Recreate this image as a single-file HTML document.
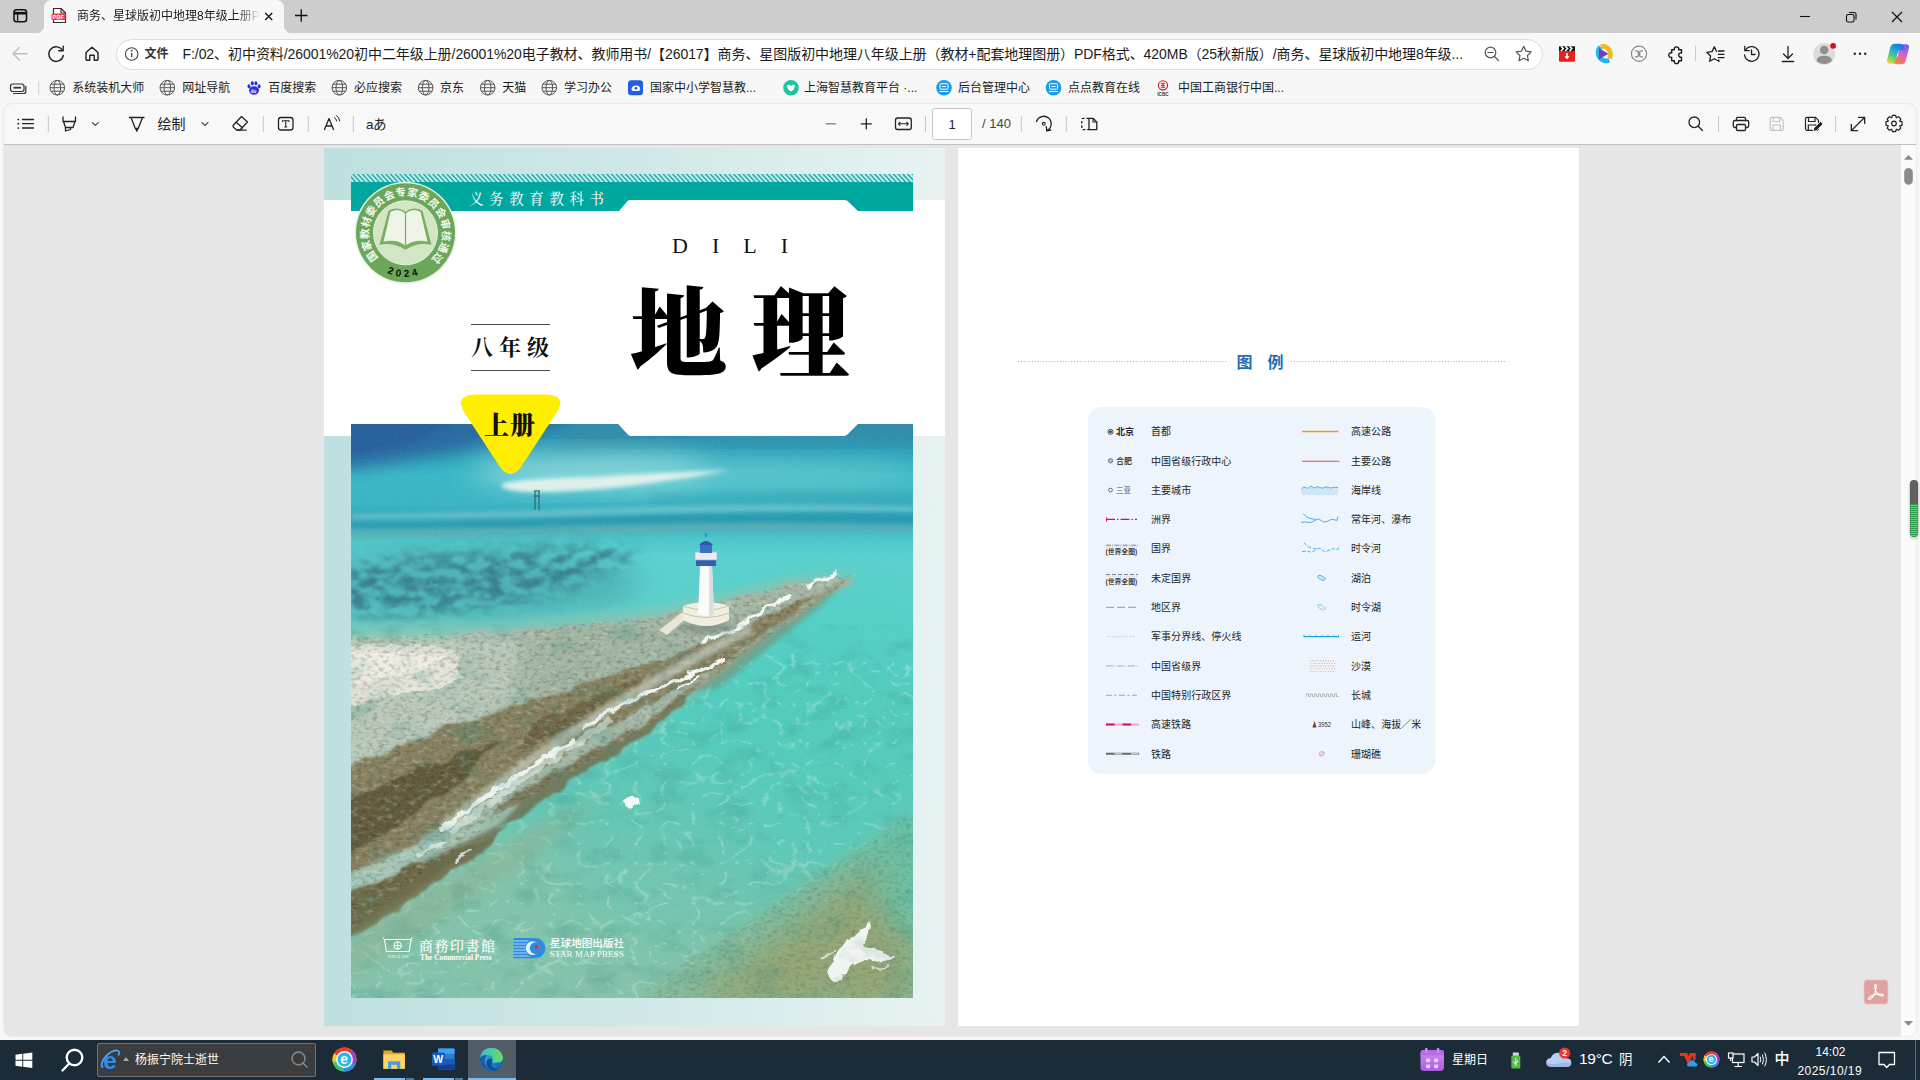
<!DOCTYPE html>
<html lang="zh-CN">
<head>
<meta charset="utf-8">
<title>商务、星球版初中地理8年级上册</title>
<style>
html,body{margin:0;padding:0}
html{width:1920px;height:1080px;overflow:hidden}
body{width:1920px;height:1080px;overflow:hidden;position:relative;background:#f7f7f7;
 font-family:"Liberation Sans","Noto Sans CJK SC",sans-serif;color:#1b1b1b;-webkit-font-smoothing:antialiased}
.a{position:absolute}
svg{position:absolute;overflow:visible}
.ic{fill:none;stroke:#1f1f1f;stroke-width:1.3;stroke-linecap:round;stroke-linejoin:round}
/* ---------- browser chrome ---------- */
#tabbar{left:0;top:0;width:1920px;height:33px;background:#cdcdcd}
#tab{left:44px;top:0;width:240px;height:33px;background:#f7f7f7;border-radius:8px 8px 0 0}
#tab:before,#tab:after{content:"";position:absolute;bottom:0;width:8px;height:8px}
#tab:before{left:-8px;background:radial-gradient(circle at 0 0,transparent 8px,#f7f7f7 8.5px)}
#tab:after{right:-8px;background:radial-gradient(circle at 100% 0,transparent 8px,#f7f7f7 8.5px)}
#tabtitle{left:33px;top:7px;width:185px;height:20px;font-size:12px;line-height:18px;white-space:nowrap;overflow:hidden;
 -webkit-mask-image:linear-gradient(90deg,#000 160px,transparent 183px);mask-image:linear-gradient(90deg,#000 160px,transparent 183px)}
#addr{left:0;top:33px;width:1920px;height:43px;background:#f7f7f7}
#url{left:116px;top:38.500px;width:1425px;height:29px;border-radius:16px;background:#fff;border:1px solid #dcdcdc}
#wenjian{left:144.500px;top:45px;font-size:12px;font-weight:700;line-height:18px;color:#333}
#urltext{left:182.500px;top:45px;font-size:14px;line-height:18px;white-space:nowrap;color:#1b1b1b;letter-spacing:-0.065px}
#bm{left:0;top:76px;width:1920px;height:28px;background:#f7f7f7}
.bk{position:absolute;top:79.500px;font-size:12px;line-height:16px;white-space:nowrap;color:#1b1b1b}
#pdfbar{left:4px;top:104px;width:1912px;height:40px;background:#f8f8f8;border-bottom:1px solid #c9c9c9;border-radius:8px 8px 0 0;box-shadow:0 0 2px rgba(0,0,0,.18)}
#huizhi{left:157.500px;top:114px;font-size:14px;line-height:20px;color:#222}
#pagebox{left:932px;top:108px;width:38px;height:30px;border:1px solid #c6c6c6;border-radius:3px;background:#fff;font-size:13px;line-height:31px;text-align:center;color:#222}
#pagecount{left:982px;top:114px;font-size:13px;line-height:20px;color:#444}
.sep{position:absolute;width:1px;background:#c8c8c8}
/* ---------- content ---------- */
#panel{left:4px;top:145px;width:1912px;height:891px;background:#e6e6e6;border-radius:0 0 8px 8px;box-shadow:0 0 2px rgba(0,0,0,.15)}
#cover{left:324px;top:148px;width:621px;height:878px;background:linear-gradient(90deg,#bfe0df 0%,#cfe7e6 55%,#e9f3f2 100%);overflow:hidden}
#page2{left:958px;top:148px;width:621px;height:878px;background:#fff}
#sbtrack{left:1901px;top:145px;width:15px;height:891px;background:#fbfbfb;border-radius:0 0 8px 0}
/* ---------- taskbar ---------- */
#task{left:0;top:1040px;width:1920px;height:40px;background:#1c2b38}
#tsearch{left:96.500px;top:1043px;width:217px;height:32px;background:#3b3c3e;border:1px solid #6f7276;border-radius:2px}
#edgebg{left:468px;top:1040px;width:48px;height:40px;background:#525d67}
.tl{top:1078px;height:2px;background:#79bbee}
.tt{color:#fff;line-height:20px;white-space:nowrap}
</style>
</head>
<body>
<!-- TAB BAR -->
<div class="a" id="tabbar"></div>
<div class="a" id="tab"><div class="a" id="tabtitle">商务、星球版初中地理8年级上册PDF</div></div>
<!-- ADDRESS BAR -->
<div class="a" id="addr"></div>
<div class="a" id="url"></div>
<div class="a" id="wenjian">文件</div>
<div class="a" id="urltext">F:/02、初中资料/26001%20初中二年级上册/26001%20电子教材、教师用书/【26017】商务、星图版初中地理八年级上册（教材+配套地理图册）PDF格式、420MB（25秋新版）/商务、星球版初中地理8年级...</div>
<!-- BOOKMARKS -->
<div class="a" id="bm"></div>
<div class="bk" style="left:72.3px">系统装机大师</div>
<div class="bk" style="left:182.3px">网址导航</div>
<div class="bk" style="left:268.3px">百度搜索</div>
<div class="bk" style="left:354px">必应搜索</div>
<div class="bk" style="left:440px">京东</div>
<div class="bk" style="left:502.3px">天猫</div>
<div class="bk" style="left:564px">学习办公</div>
<div class="bk" style="left:650px">国家中小学智慧教...</div>
<div class="bk" style="left:804px">上海智慧教育平台 ·...</div>
<div class="bk" style="left:958px">后台管理中心</div>
<div class="bk" style="left:1068px">点点教育在线</div>
<div class="bk" style="left:1178px">中国工商银行中国...</div>
<!-- PDF TOOLBAR -->
<div class="a" id="pdfbar"></div>
<div class="a" id="huizhi">绘制</div>
<div class="a" id="pagebox">1</div>
<div class="a" id="pagecount">/ 140</div>
<svg id="chromeicons" width="1920" height="146" viewBox="0 0 1920 146" style="left:0;top:0">
<g fill="none" stroke="#111" stroke-width="1.5"><rect x="14" y="9.750" width="12.500" height="12" rx="2.500"/><path d="M14 13.200H26.500" stroke-width="2.600"/><path d="M17.600 13V21.500" stroke-width="1.300"/></g>
<g><path d="M53.500 8.500H61L65.500 13V22.500H53.500Z" fill="#fff" stroke="#2e2e2e" stroke-width="1.200" stroke-linejoin="round"/><path d="M61 8.500V13H65.500" fill="none" stroke="#2e2e2e" stroke-width="1.100"/><rect x="51.500" y="13.500" width="14" height="6.500" rx="1" fill="#e5484d"/><text x="52.600" y="19" font-family="'Liberation Sans',sans-serif" font-weight="700" font-size="5.400" fill="#fff" letter-spacing=".2">PDF</text></g>
<path d="M265.200 13L272.200 20M272.200 13L265.200 20" stroke="#111" stroke-width="1.300" fill="none"/>
<path d="M295 15.500H307.500M301.250 9.250V21.750" stroke="#111" stroke-width="1.300" fill="none"/>
<path d="M1800 16.500H1810" stroke="#111" stroke-width="1.100"/>
<g fill="none" stroke="#111" stroke-width="1.100"><rect x="1846.500" y="14.500" width="7.500" height="7.500" rx="1.500"/><path d="M1849 12.500H1854Q1856 12.500 1856 14.500V19.500"/></g>
<path d="M1892 12L1902 22M1902 12L1892 22" stroke="#111" stroke-width="1.200" fill="none"/>
<path d="M27 53.700H13M19.300 47.500L13 53.700L19.300 60" fill="none" stroke="#bdbdbd" stroke-width="1.400" stroke-linecap="round" stroke-linejoin="round"/>
<g fill="none" stroke="#222" stroke-width="1.400" stroke-linecap="round" stroke-linejoin="round"><path d="M62.500 50.500A7.300 7.300 0 1 0 63.300 55.500"/><path d="M63.200 46.300V50.800H58.700"/></g>
<path d="M86 52.500L92 47.200L98 52.500V59.500Q98 60.200 97.300 60.200H94.200V55.200H89.800V60.200H86.700Q86 60.200 86 59.500Z" fill="none" stroke="#222" stroke-width="1.400" stroke-linejoin="round"/>
<g><circle cx="131.700" cy="54" r="6.300" fill="none" stroke="#444" stroke-width="1.100"/><path d="M131.700 53V57.200" stroke="#444" stroke-width="1.300"/><circle cx="131.700" cy="50.700" r=".9" fill="#444"/></g>
<g fill="none" stroke="#555" stroke-width="1.200" stroke-linecap="round"><circle cx="1490.500" cy="52.500" r="5.300"/><path d="M1494.500 56.500L1498.500 60.500M1487.800 52.500H1493.200"/></g>
<path d="M1523.70 46.30L1525.99 51.14L1531.31 51.83L1527.41 55.51L1528.40 60.77L1523.70 58.20L1519.00 60.77L1519.99 55.51L1516.09 51.83L1521.41 51.14Z" fill="none" stroke="#555" stroke-width="1.200" stroke-linejoin="round"/>
<g><rect x="1559" y="50.500" width="16" height="11.300" rx="1" fill="#e8211b"/><path d="M1559 46.300H1575V51H1559Z" fill="#111"/><path d="M1561 46.300L1563.300 48.600L1561 51M1565.300 46.300L1567.600 48.600L1565.300 51M1569.600 46.300L1571.900 48.600L1569.600 51" stroke="#fff" stroke-width="1.500" fill="none"/><path d="M1567 53V57.200" stroke="#fff" stroke-width="1.600"/><path d="M1564.300 56.300H1569.700L1567 59.300Z" fill="#fff"/></g>
<g fill="none"><path d="M1601.200 46A8 8 0 0 1 1609.800 57.800" stroke="#f5b81e" stroke-width="4.600" transform="translate(-.4 .6)"/><path d="M1599.200 47.200A8.200 8.200 0 0 0 1608 60.600" stroke="#1fb5ea" stroke-width="4.800" transform="translate(1.300 -.3)"/><path d="M1599 48.300L1608.500 53.800L1599 59.300Z" fill="#6b3fc9"/></g>
<g fill="none" stroke="#8a8a8a"><circle cx="1639" cy="53.800" r="7.600" stroke-width="1.200"/><path d="M1635 50.800H1637Q1638.300 50.800 1638.300 52.100V55.500Q1638.300 56.800 1637 56.800H1635M1643 50.800H1641Q1639.700 50.800 1639.700 52.100V55.500Q1639.700 56.800 1641 56.800H1643M1638.300 52.300H1639.700M1638.300 55.300H1639.700" stroke-width="1.300"/></g>
<path d="M1671.700 49.800H1674.300A2.300 2.300 0 1 1 1678.700 49.800H1681.500V53A2.200 2.200 0 1 0 1681.500 57.200V60.700H1678.700A2.300 2.300 0 1 1 1674.300 60.700H1671.700V57.300A2.300 2.300 0 1 1 1671.700 52.900Z" fill="none" stroke="#1b1b1b" stroke-width="1.400" stroke-linejoin="round"/>
<path d="M1695.500 46V61" stroke="#c9c9c9" stroke-width="1"/>
<path d="M1714.30 46.80L1716.59 51.64L1721.91 52.33L1718.01 56.01L1719.00 61.27L1714.30 58.70L1709.60 61.27L1710.59 56.01L1706.69 52.33L1712.01 51.64Z" fill="none" stroke="#1b1b1b" stroke-width="1.300" stroke-linejoin="round"/><rect x="1716.800" y="49" width="9" height="10.500" fill="#f7f7f7"/><path d="M1718.300 51H1724M1718.300 54.300H1724M1718.300 57.600H1724" stroke="#1b1b1b" stroke-width="1.300" stroke-linecap="round"/>
<g fill="none" stroke="#222" stroke-width="1.300" stroke-linecap="round" stroke-linejoin="round"><path d="M1745.300 50.500A7.300 7.300 0 1 1 1744.500 55"/><path d="M1744.800 46.300V50.700H1749.200"/><path d="M1751.500 50V54.500H1755"/></g>
<g fill="none" stroke="#222" stroke-width="1.300" stroke-linecap="round" stroke-linejoin="round"><path d="M1788 46.500V58M1783.500 54L1788 58.500L1792.500 54M1782.300 61.500H1793.700"/></g>
<g><circle cx="1824.200" cy="54" r="11" fill="#dcdcdc"/><circle cx="1824.200" cy="50" r="4.300" fill="#938e8b"/><path d="M1816.500 60.800Q1817 55.800 1824.200 55.800Q1831.400 55.800 1831.900 60.800A11 11 0 0 1 1816.500 60.800Z" fill="#938e8b"/><circle cx="1833.100" cy="45.800" r="2.900" fill="#e30b13"/></g>
<g fill="#222"><circle cx="1854.800" cy="53.700" r="1.200"/><circle cx="1860" cy="53.700" r="1.200"/><circle cx="1865.200" cy="53.700" r="1.200"/></g>
<g id="copilot"><defs><linearGradient id="cp1" x1=".7" y1="0" x2=".2" y2="1"><stop offset="0" stop-color="#1a73e8"/><stop offset=".35" stop-color="#23a6d5"/><stop offset=".65" stop-color="#4ccf7a"/><stop offset="1" stop-color="#f5d547"/></linearGradient><linearGradient id="cp2" x1=".8" y1="0" x2=".2" y2="1"><stop offset="0" stop-color="#7d5cf2"/><stop offset=".45" stop-color="#d95fc9"/><stop offset=".8" stop-color="#f7775a"/><stop offset="1" stop-color="#f7a03c"/></linearGradient></defs>
<path d="M1901.500 64.200H1896Q1893 64.200 1892 61.200L1891 57.700H1895.500Q1897.500 57.700 1898 55.700L1900.500 47.200Q1901.300 44.200 1904.500 44.200H1906Q1910 44.200 1908.800 48.400L1906 59.700Q1905 64.200 1901.500 64.200Z" fill="url(#cp2)"/>
<path d="M1894.500 43.800H1900Q1903 43.800 1904 46.800L1905 50.300H1900.500Q1898.500 50.300 1898 52.300L1895.500 60.800Q1894.700 63.800 1891.500 63.800H1890Q1886 63.800 1887.200 59.600L1890 48.300Q1891 43.800 1894.500 43.800Z" fill="url(#cp1)"/>
<path d="M1898 55.700L1900.500 47.200Q1901.300 44.200 1904.500 44.200L1902 50.300H1900.500Q1898.500 50.300 1898 52.300Z" fill="#6a4ce8" opacity=".55"/></g>
<g fill="none" stroke="#333" stroke-width="1.200"><rect x="10.500" y="84" width="13.500" height="7.500" rx="2.200"/><path d="M13.500 87.700H21" stroke-width="1.800"/><path d="M25.800 86V91.500Q25.800 93.500 23.800 93.500H13"/></g>
<path d="M38.700 81V95" stroke="#cfcfcf" stroke-width="1"/>
<g fill="none" stroke="#555" stroke-width="1"><circle cx="57.3" cy="87.7" r="7.3"/><ellipse cx="57.3" cy="87.7" rx="3.29" ry="7.3"/><path d="M50.0 87.7H64.6M50.73 84.20H63.87M50.73 91.20H63.87"/></g>
<g fill="none" stroke="#555" stroke-width="1"><circle cx="167.3" cy="87.7" r="7.3"/><ellipse cx="167.3" cy="87.7" rx="3.29" ry="7.3"/><path d="M160.0 87.7H174.60000000000002M160.73 84.20H173.87M160.73 91.20H173.87"/></g>
<g fill="none" stroke="#555" stroke-width="1"><circle cx="339.3" cy="87.7" r="7.3"/><ellipse cx="339.3" cy="87.7" rx="3.29" ry="7.3"/><path d="M332.0 87.7H346.6M332.73 84.20H345.87M332.73 91.20H345.87"/></g>
<g fill="none" stroke="#555" stroke-width="1"><circle cx="425.7" cy="87.7" r="7.3"/><ellipse cx="425.7" cy="87.7" rx="3.29" ry="7.3"/><path d="M418.4 87.7H433.0M419.13 84.20H432.27M419.13 91.20H432.27"/></g>
<g fill="none" stroke="#555" stroke-width="1"><circle cx="487.7" cy="87.7" r="7.3"/><ellipse cx="487.7" cy="87.7" rx="3.29" ry="7.3"/><path d="M480.4 87.7H495.0M481.13 84.20H494.27M481.13 91.20H494.27"/></g>
<g fill="none" stroke="#555" stroke-width="1"><circle cx="549.3" cy="87.7" r="7.3"/><ellipse cx="549.3" cy="87.7" rx="3.29" ry="7.3"/><path d="M542.0 87.7H556.5999999999999M542.73 84.20H555.87M542.73 91.20H555.87"/></g>
<g fill="#2932e1"><ellipse cx="254" cy="90.500" rx="5" ry="4.200"/><ellipse cx="249" cy="86.300" rx="1.500" ry="2.100"/><ellipse cx="252.300" cy="83.300" rx="1.500" ry="2.100"/><ellipse cx="255.900" cy="83.300" rx="1.500" ry="2.100"/><ellipse cx="259.100" cy="86.300" rx="1.500" ry="2.100"/></g><text x="250.800" y="92.800" font-family="'Liberation Sans',sans-serif" font-size="4.500" font-weight="700" fill="#fff">du</text>
<g><rect x="628" y="80.300" width="15" height="15" rx="3.200" fill="#1f5fe0"/><path d="M631.500 89.500Q631.500 86 635.500 85.500Q639.500 85 640 88Q641 90.500 638 91H633Q631.500 91 631.500 89.500Z" fill="#fff"/><circle cx="636" cy="88.300" r="1.400" fill="#1f5fe0"/></g>
<g><circle cx="791" cy="87.700" r="7.800" fill="#1fc3a0"/><path d="M787 85.500Q789 84 791 86Q793 84 795 85.500Q794.500 90 791 91.500Q787.500 90 787 85.500Z" fill="#fff"/></g>
<g><circle cx="944" cy="87.700" r="7.800" fill="#1d9be6"/><rect x="940" y="83.700" width="8" height="5.500" rx=".8" fill="none" stroke="#fff" stroke-width="1"/><path d="M939.5 91.500H948.5M942 86.500H946" stroke="#fff" stroke-width="1"/></g>
<g><circle cx="1053.5" cy="87.700" r="7.800" fill="#1d9be6"/><rect x="1049.5" y="83.700" width="8" height="5.500" rx=".8" fill="none" stroke="#fff" stroke-width="1"/><path d="M1049.0 91.500H1058.0M1051.5 86.500H1055.5" stroke="#fff" stroke-width="1"/></g>
<g><circle cx="1163" cy="85.300" r="4.600" fill="none" stroke="#c8161d" stroke-width="1.100"/><path d="M1160.800 83.300H1165.200M1160.800 87.300H1165.200M1163 83.300V87.300M1161 85.300H1165" stroke="#c8161d" stroke-width=".9"/><text x="1157.300" y="95.500" font-family="'Liberation Sans',sans-serif" font-size="4.600" font-weight="700" fill="#333">ICBC</text></g>
<g fill="none" stroke="#222" stroke-width="1.300" stroke-linecap="round"><path d="M22.500 119.500H33.500M22.500 123.700H33.500M22.500 128H33.500"/><path d="M18.200 119.500H18.400M18.200 123.700H18.400M18.200 128H18.400" stroke-width="1.700"/></g>
<path d="M48.3 116V132" stroke="#c6c6c6" stroke-width="1"/>
<path d="M263.3 116V132" stroke="#c6c6c6" stroke-width="1"/>
<path d="M308.3 116V132" stroke="#c6c6c6" stroke-width="1"/>
<path d="M353.3 116V132" stroke="#c6c6c6" stroke-width="1"/>
<path d="M925.5 116V132" stroke="#c6c6c6" stroke-width="1"/>
<path d="M1021.3 116V132" stroke="#c6c6c6" stroke-width="1"/>
<path d="M1066.3 116V132" stroke="#c6c6c6" stroke-width="1"/>
<path d="M1718.5 116V132" stroke="#c6c6c6" stroke-width="1"/>
<path d="M1835.6 116V132" stroke="#c6c6c6" stroke-width="1"/>
<g fill="none" stroke="#222" stroke-width="1.300" stroke-linejoin="round" stroke-linecap="round"><path d="M63 117V121.500H75.500V117M63.500 121.500L65.500 127.500H73L75 121.500M65.500 127.500V131L70.500 129.500V127.500"/></g>
<path d="M92.300 122.500L95.300 125.500L98.300 122.500" fill="none" stroke="#555" stroke-width="1.100" stroke-linecap="round" stroke-linejoin="round"/>
<g fill="none" stroke="#222" stroke-width="1.300" stroke-linejoin="round" stroke-linecap="round"><path d="M129.500 117.500H144M131 117.500L135.300 128.500H138.200L142.500 117.500M135.800 128.500L136.800 131.200L137.700 128.500"/></g>
<path d="M202 122.500L205 125.500L208 122.500" fill="none" stroke="#555" stroke-width="1.100" stroke-linecap="round" stroke-linejoin="round"/>
<g fill="none" stroke="#222" stroke-width="1.300" stroke-linejoin="round" stroke-linecap="round"><path d="M241.500 116.500L247.500 122L240 130H236.500L233.300 127Q232.600 126 233.300 125.200Z"/><path d="M236.200 122.200L242.300 127.700M238 130.200H246"/></g>
<g fill="none" stroke="#222" stroke-width="1.300" stroke-linejoin="round"><rect x="278.500" y="117.500" width="14.500" height="12.500" rx="2.500"/><path d="M282.500 122V120.700H289V122M285.750 120.700V127M284.300 127H287.200" stroke-width="1.100"/></g>
<g fill="none" stroke="#222" stroke-width="1.300" stroke-linecap="round" stroke-linejoin="round"><path d="M324.500 129.500L329 118.500L333.500 129.500M326 126H332"/><path d="M334.500 117.500Q336.300 118.800 336.700 121M336.500 115.500Q339.300 117.500 339.800 121" stroke-width="1"/></g>
<text x="366" y="128.500" font-family="'Liberation Sans','Noto Sans CJK JP',sans-serif" font-size="13.500" fill="#222" letter-spacing="-.5">aあ</text>
<path d="M825.800 123.800H835.800" stroke="#7a7a7a" stroke-width="1.300"/>
<path d="M860.800 123.800H871.800M866.300 118.300V129.300" stroke="#222" stroke-width="1.300"/>
<g fill="none" stroke="#222" stroke-width="1.300" stroke-linejoin="round"><rect x="895.500" y="118" width="15.800" height="11.500" rx="2.200"/><path d="M898.500 123.800H908.300M900.300 122L898.500 123.800L900.300 125.600M906.500 122L908.300 123.800L906.500 125.600" stroke-width="1.100"/></g>
<g fill="none" stroke="#222" stroke-width="1.300" stroke-linecap="round" stroke-linejoin="round"><path d="M1036.500 121.500A7.500 7.500 0 1 1 1047 130.500"/><path d="M1046.300 126.700L1046.800 130.800L1050.800 130"/><circle cx="1043.800" cy="123.800" r="1.400" stroke-width="1.100"/></g>
<g fill="none" stroke="#222" stroke-width="1.300" stroke-linejoin="round"><path d="M1089 118.300H1093L1096.800 122V129.700H1089Z"/><path d="M1093 118.300V122H1096.800" stroke-width="1.100"/><path d="M1089 118.300H1083.500Q1081.800 118.300 1081.800 120V128Q1081.800 129.700 1083.500 129.700H1089" stroke-dasharray="2.600 1.800"/></g>
<g fill="none" stroke="#222" stroke-width="1.300" stroke-linecap="round"><circle cx="1694.300" cy="122.300" r="5.300"/><path d="M1698.200 126.200L1702.500 130.500"/></g>
<g fill="none" stroke="#222" stroke-width="1.300" stroke-linejoin="round"><path d="M1736.500 120.500V118.500Q1736.500 117.300 1737.700 117.300H1744.300Q1745.500 117.300 1745.500 118.500V120.500"/><path d="M1736.500 127.500H1735Q1733.300 127.500 1733.300 125.800V122.200Q1733.300 120.500 1735 120.500H1747Q1748.700 120.500 1748.700 122.200V125.800Q1748.700 127.500 1747 127.500H1745.500"/><rect x="1736.500" y="124.500" width="9" height="6" rx="1.200"/></g>
<g fill="none" stroke="#c2c2c2" stroke-width="1.200" stroke-linejoin="round"><path d="M1770.2 118.800Q1770.2 117.300 1771.7 117.300H1780.2L1783.2 120.300V128.800Q1783.2 130.300 1781.7 130.300H1771.7Q1770.2 130.300 1770.2 128.800Z"/><path d="M1773.2 117.500V121.500H1779.7V117.500M1773.0 130V125H1780.4V130"/></g>
<g fill="none" stroke="#222" stroke-width="1.200" stroke-linejoin="round"><path d="M1805.5 118.800Q1805.5 117.300 1807.0 117.300H1815.5L1818.5 120.300V128.800Q1818.5 130.300 1817.0 130.300H1807.0Q1805.5 130.300 1805.5 128.800Z"/><path d="M1808.5 117.500V121.500H1815.0V117.500M1808.3 130V125H1815.7V130"/></g>
<path d="M1813 131.500L1813.800 128L1820.500 121.300L1823.200 124L1816.500 130.700Z" fill="#222" stroke="#f7f7f7" stroke-width="1"/>
<g fill="none" stroke="#222" stroke-width="1.300" stroke-linecap="round" stroke-linejoin="round"><path d="M1851.500 130.500L1864.500 117.500M1858.500 117.300H1864.700V123.500M1851.300 124.500V130.700H1857.500"/></g>
<path d="M1892.37 115.46L1895.63 115.46L1896.36 117.77L1896.39 117.78L1898.53 116.67L1900.83 118.97L1899.72 121.11L1899.73 121.14L1902.04 121.87L1902.04 125.13L1899.73 125.86L1899.72 125.89L1900.83 128.03L1898.53 130.33L1896.39 129.22L1896.36 129.23L1895.63 131.54L1892.37 131.54L1891.64 129.23L1891.61 129.22L1889.47 130.33L1887.17 128.03L1888.28 125.89L1888.27 125.86L1885.96 125.13L1885.96 121.87L1888.27 121.14L1888.28 121.11L1887.17 118.97L1889.47 116.67L1891.61 117.78L1891.64 117.77Z" fill="none" stroke="#222" stroke-width="1.200" stroke-linejoin="round"/><circle cx="1894" cy="123.5" r="2.300" fill="none" stroke="#222" stroke-width="1.200"/>
</svg>
<!-- CONTENT -->
<div class="a" id="panel"></div>
<div class="a" id="cover">
<svg id="coversvg" width="621" height="878" viewBox="0 0 621 878" style="left:0;top:0">
<defs>
 <linearGradient id="pgbg" x1="0" x2="1" y1="0" y2="0"><stop offset="0" stop-color="#bde0df"/><stop offset=".5" stop-color="#cfe8e7"/><stop offset="1" stop-color="#e8f3f2"/></linearGradient>
 <pattern id="hatch" width="4.7" height="9" patternUnits="userSpaceOnUse" patternTransform="skewX(42)"><rect width="4.7" height="9" fill="#b4eceb"/><rect width="1.7" height="9" fill="#1fa29d"/></pattern>
 <clipPath id="photoclip"><path d="M27 276H294L304 287Q305 288 307 288H520Q522 288 523 287L534 276H589V850H27Z"/></clipPath>
 <!-- photo gradients -->
 <linearGradient id="sea" x1="0" x2="0" y1="0" y2="1">
  <stop offset="0" stop-color="#2f93b2"/><stop offset=".04" stop-color="#2c9fb9"/><stop offset=".09" stop-color="#3bb7c6"/><stop offset=".14" stop-color="#3ab4c4"/>
  <stop offset=".165" stop-color="#2fa3b8"/><stop offset=".2" stop-color="#4cc6ca"/><stop offset=".23" stop-color="#5ad0cf"/><stop offset=".33" stop-color="#5ad0cb"/><stop offset=".5" stop-color="#55c9bc"/><stop offset=".75" stop-color="#66c6b4"/><stop offset="1" stop-color="#7fc2ab"/>
 </linearGradient>
 <filter id="b2" x="-20%" y="-20%" width="140%" height="140%"><feGaussianBlur stdDeviation="2"/></filter>
 <filter id="b4" x="-30%" y="-30%" width="160%" height="160%"><feGaussianBlur stdDeviation="4"/></filter>
 <filter id="b8" x="-40%" y="-40%" width="180%" height="180%"><feGaussianBlur stdDeviation="8"/></filter>
 <filter id="b14" x="-50%" y="-50%" width="200%" height="200%"><feGaussianBlur stdDeviation="14"/></filter>
 <filter id="b24" x="-60%" y="-60%" width="220%" height="220%"><feGaussianBlur stdDeviation="24"/></filter>
 <filter id="rough" x="-10%" y="-10%" width="120%" height="120%"><feTurbulence type="fractalNoise" baseFrequency="0.035" numOctaves="3" seed="4" result="n"/><feDisplacementMap in="SourceGraphic" in2="n" scale="14" xChannelSelector="R" yChannelSelector="G"/><feGaussianBlur stdDeviation="1.2"/></filter>
 <filter id="rough2" x="-10%" y="-10%" width="120%" height="120%"><feTurbulence type="fractalNoise" baseFrequency="0.08" numOctaves="3" seed="9" result="n"/><feDisplacementMap in="SourceGraphic" in2="n" scale="9" xChannelSelector="R" yChannelSelector="G"/><feGaussianBlur stdDeviation="0.7"/></filter>
 <filter id="mottle" color-interpolation-filters="sRGB" x="0" y="0" width="100%" height="100%"><feTurbulence type="fractalNoise" baseFrequency="0.06 0.11" numOctaves="4" seed="7"/><feColorMatrix type="matrix" values="0 0 0 0 0.22  0 0 0 0 0.50  0 0 0 0 0.55  3.6 0 0 0 -1.35"/><feGaussianBlur stdDeviation="0.8"/></filter>
 <filter id="grain" color-interpolation-filters="sRGB" x="0" y="0" width="100%" height="100%"><feTurbulence type="fractalNoise" baseFrequency="0.5 0.8" numOctaves="2" seed="3"/><feColorMatrix type="matrix" values="0 0 0 0 1  0 0 0 0 1  0 0 0 0 1  0.9 0 0 0 -0.42"/></filter>
 <filter id="grainD" color-interpolation-filters="sRGB" x="0" y="0" width="100%" height="100%"><feTurbulence type="fractalNoise" baseFrequency="0.18 0.3" numOctaves="3" seed="12"/><feColorMatrix type="matrix" values="0 0 0 0 0.16  0 0 0 0 0.14  0 0 0 0 0.08  2.2 0 0 0 -1.05"/></filter>
<clipPath id="patchclip"><path d="M0 142Q40 130 120 126Q200 118 300 122Q280 146 230 162Q170 184 100 190Q40 196 0 194Z"/></clipPath>
 <clipPath id="reefclip"><path d="M0 212L160 208L308 192L440 160L506 150L404 222L300 300L160 385L80 443L0 505Z"/></clipPath>
<clipPath id="lrclip"><path d="M562 388L524 414L400 496L280 574H562Z"/></clipPath>
 <filter id="grainL" color-interpolation-filters="sRGB" x="0" y="0" width="100%" height="100%"><feTurbulence type="fractalNoise" baseFrequency="0.12 0.22" numOctaves="3" seed="21"/><feColorMatrix type="matrix" values="0 0 0 0 0.88  0 0 0 0 0.92  0 0 0 0 0.86  2.2 0 0 0 -1.1"/></filter>
 <filter id="wmottle" color-interpolation-filters="sRGB" x="0" y="0" width="100%" height="100%"><feTurbulence type="fractalNoise" baseFrequency="0.03 0.05" numOctaves="4" seed="31"/><feColorMatrix type="matrix" values="0 0 0 0 0.22  0 0 0 0 0.55  0 0 0 0 0.50  2.0 0 0 0 -1.0"/></filter>
<mask id="patchmask" maskUnits="userSpaceOnUse" x="-20" y="90" width="480" height="150"><path d="M-10 144Q40 132 120 128Q200 120 290 124Q270 146 226 162Q170 184 100 188Q40 194 -10 192Z" fill="#fff" filter="url(#b8)"/></mask>
<filter id="caustic" color-interpolation-filters="sRGB" x="0" y="0" width="100%" height="100%"><feTurbulence type="turbulence" baseFrequency="0.035 0.05" numOctaves="2" seed="5"/><feColorMatrix type="matrix" values="0 0 0 0 0.86  0 0 0 0 0.97  0 0 0 0 0.92  -7 0 0 0 0.85"/><feGaussianBlur stdDeviation="0.6"/></filter>
</defs>
<rect width="621" height="878" fill="url(#pgbg)"/>
<rect x="0" y="52" width="621" height="236" fill="#fff"/>
<rect x="27" y="26" width="562" height="9" fill="url(#hatch)"/>
<path d="M27 34H589V63H534L523 52.6Q522 52 520 52H307Q305 52 304 52.6L295 63H27Z" fill="#00a79e"/>
<!--PHOTO-->
<g clip-path="url(#photoclip)">
<g transform="translate(27 276)" id="photo">
 <rect width="562" height="574" fill="url(#sea)"/>
 <!-- deep blue top-left -->
 <path d="M-20 -10H250L170 14L90 30L-20 48Z" fill="#2b679f" opacity=".95" filter="url(#b8)"/>
 <path d="M-20 -10H120L60 18L-20 34Z" fill="#255c99" opacity=".7" filter="url(#b4)"/>
 <path d="M230 -10H580V22Q450 14 330 18Q260 22 200 30Z" fill="#3489a6" opacity=".75" filter="url(#b8)"/>
 <!-- right side lighter gradient -->
 <ellipse cx="480" cy="300" rx="150" ry="150" fill="#4fcdbf" opacity=".5" filter="url(#b24)"/>
 <!-- lower-left greener water -->
 <ellipse cx="150" cy="520" rx="260" ry="110" fill="#86c3ab" opacity=".8" filter="url(#b24)"/>
 <ellipse cx="330" cy="440" rx="120" ry="80" fill="#63c6b2" opacity=".5" filter="url(#b24)"/>
 <!-- sand bar (light patch) -->
 <ellipse cx="240" cy="47" rx="120" ry="16" fill="#a6e2e0" opacity=".8" filter="url(#b14)"/>
 <ellipse cx="400" cy="51" rx="170" ry="13" fill="#7fd6d6" opacity=".6" filter="url(#b14)"/>
 <path d="M150 60Q170 54 240 53Q300 49 380 46Q340 54 300 59Q230 69 175 68Q148 66 150 60Z" fill="#e9f4ee" opacity=".92" filter="url(#b2)"/>
 <!-- horizontal streaks -->
 <path d="M0 90Q150 88 300 82Q430 78 562 82V88Q430 86 300 90Q150 96 0 96Z" fill="#86cdd0" opacity=".55" filter="url(#b2)"/>
 <path d="M0 98Q150 98 300 92Q430 88 562 90V100Q430 98 300 100Q150 106 0 106Z" fill="#2792ab" opacity=".6" filter="url(#b2)"/>
 <path d="M0 107Q200 104 330 100Q450 98 562 102V108Q450 106 330 108Q200 112 0 114Z" fill="#6aa9ad" opacity=".6" filter="url(#b2)"/>
 <path d="M300 72Q450 66 562 70V80Q450 76 300 80Z" fill="#2a8ca6" opacity=".35" filter="url(#b4)"/>
 <!-- mottled dark reef patch -->
 <ellipse cx="120" cy="160" rx="170" ry="34" fill="#3f9099" opacity=".45" filter="url(#b14)"/>
 <g mask="url(#patchmask)"><rect x="0" y="100" width="440" height="130" filter="url(#mottle)"/></g>
 <rect x="0" y="230" width="562" height="344" filter="url(#caustic)" opacity=".4"/>
 <!-- lower-right brown/green reef -->
 <path d="M562 392L524 416L400 498L280 580H562Z" fill="#86b592" opacity=".7" filter="url(#b8)"/>
 <path d="M562 420L500 462L420 520L340 580H562Z" fill="#98a26e" opacity=".8" filter="url(#b14)"/>
 <ellipse cx="560" cy="450" rx="40" ry="60" fill="#63c6ae" opacity=".7" filter="url(#b14)"/>
 <g clip-path="url(#lrclip)"><rect x="260" y="380" width="310" height="200" filter="url(#grainD)" opacity=".2"/></g>
 <!-- main reef wedge -->
 <path d="M-10 200L160 196L308 182L440 152L510 146L404 226L300 306L160 392L80 450L-10 512Z" fill="#8fc4b0" opacity=".6" filter="url(#b4)"/>
 <g filter="url(#rough)">
  <path d="M-10 212L90 214L160 208L250 200L308 192L372 178L440 160L508 150L470 176L404 222L345 268L300 300L229 342L160 385L80 443L-10 505Z" fill="#a4b7a6"/>
 </g>
 <!-- sand area upper-left of wedge -->
 <path d="M-10 214L180 210L200 250L120 300L40 330L-10 346Z" fill="#bccbbd" opacity=".85" filter="url(#b4)"/>
 <g filter="url(#rough2)">
  <path d="M-10 222L60 221L104 226L108 240L64 262L-10 284Z" fill="#dfe0d5"/>
  <path d="M-10 227L50 228L96 232L70 248L-10 262Z" fill="#efece3"/>
  <path d="M52 248L104 238L112 252L84 266L40 272Z" fill="#e6e5da"/>
 </g>
 <!-- greenish tint top band of wedge -->
 <path d="M170 212L308 194L372 180L460 156L400 190L330 220L250 250L180 276L160 258Z" fill="#a3b5a2" opacity=".8" filter="url(#b4)"/>
 <!-- olive-brown lower-left -->
 <g filter="url(#rough)">
  <path d="M-10 346L60 316L150 286L240 258L320 232L400 200L470 168L420 206L350 252L260 300L200 336L150 366L90 404L30 440L-10 456Z" fill="#857d5c" opacity=".95"/>
  <path d="M-10 380L70 344L150 316L106 360L30 412L-10 436Z" fill="#5e5538" opacity=".9"/>
  <path d="M180 300L300 250L230 296L170 330Z" fill="#6b6242" opacity=".8"/>
 </g>
 <!-- dark edge strip along wedge -->
 <g filter="url(#rough)"><path d="M-10 478L60 436L120 400L180 362L240 328L300 294L350 258L330 284L280 320L220 358L160 398L100 440L40 482L-10 518Z" fill="#6f6848" opacity=".8"/></g>
 <path d="M330 270L400 218L460 176L500 152L470 182L420 222L370 262Z" fill="#7c7a5c" opacity=".45" filter="url(#b2)"/>
 <!-- second dark strip -->
 <path d="M-10 452L90 412L170 378L150 400L60 444L-10 478Z" fill="#a9cdbd" opacity=".85" filter="url(#b2)"/>
 <g filter="url(#rough)"><path d="M-10 476L60 444L110 426L158 402L124 434L60 474L-10 520Z" fill="#6d6645" opacity=".9"/></g>
 <path d="M-10 520L60 476L130 436L190 400L260 366L200 420L100 490L-10 560Z" fill="#8fae8c" opacity=".5" filter="url(#b8)"/>
 <!-- grain over reef -->
 <g clip-path="url(#reefclip)"><rect x="0" y="140" width="520" height="380" filter="url(#grainD)" opacity=".32"/><rect x="0" y="140" width="520" height="380" filter="url(#grainL)" opacity=".38"/></g>
 <!-- foam line -->
 <g filter="url(#rough2)" fill="none" stroke="#f2f7f4" stroke-linecap="round">
  <path d="M484 150Q470 156 455 163" stroke-width="2.5"/>
  <path d="M440 172Q410 186 384 204Q366 212 352 218" stroke-width="3.5"/>
  <path d="M372 236Q330 254 296 270Q262 284 232 304" stroke-width="4"/>
  <path d="M222 316Q196 332 170 350Q140 368 108 392Q98 400 90 406" stroke-width="5"/>
  <path d="M330 262Q340 258 346 254" stroke-width="2.5"/>
 </g>
 <path d="M400 204Q330 240 250 290Q170 340 92 404" stroke="#dcebe4" stroke-width="10" opacity=".5" fill="none" filter="url(#b2)"/><path d="M260 296Q190 340 100 408" stroke="#e6f1ec" stroke-width="7" opacity=".6" fill="none" filter="url(#rough2)"/>
 <path d="M96 420Q80 424 66 432M120 426Q110 432 102 440" stroke="#e8f3ee" stroke-width="3" opacity=".8" fill="none" filter="url(#rough2)"/>
 <path d="M272 376Q280 372 288 374Q290 380 282 384Q274 386 272 376Z" fill="#f4f8f6" filter="url(#rough2)"/>
 <!-- foam lower right -->
 <g filter="url(#rough2)"><path d="M478 550Q481 530 494 521Q508 509 517 498Q520 509 511 520Q528 525 546 533Q530 538 511 537Q498 543 486 557Q480 556 478 550Z" fill="#f5f8f7" opacity=".95"/><path d="M470 536Q476 530 484 528M520 544Q532 546 540 542" stroke="#eef6f3" stroke-width="2" fill="none" opacity=".7"/></g>
 <!-- water texture -->
 <rect width="562" height="574" filter="url(#grain)" opacity=".2"/>
 <rect y="200" width="562" height="374" filter="url(#wmottle)" opacity=".35"/>
 <!-- marker pole -->
 <path d="M184 67V86M188 67V86M183 67H189M183.500 72H188.500" stroke="#2b5560" stroke-width="1" fill="none"/>
 <!-- lighthouse -->
 <g id="lh">
  <ellipse cx="356" cy="204" rx="26" ry="6" fill="#6f7f78" opacity=".5" filter="url(#b2)"/>
  <path d="M308 206L331 188L338 192L316 211Z" fill="#e9e6d6"/>
  <path d="M308 206L331 188" stroke="#bdb79c" stroke-width="1" fill="none"/>
  <path d="M332 182Q355 174 378 182V196Q355 208 332 196Z" fill="#f1eedf"/>
  <path d="M332 182Q355 190 378 182M332 189Q355 198 378 189" stroke="#c9c3a6" stroke-width="1" fill="none"/>
  <path d="M349 142H361L363 190Q355 194 347 190Z" fill="#fbfbfa"/>
  <path d="M358 142H361L363 190Q360 192 358 192Z" fill="#d9dde0"/>
  <rect x="345" y="135" width="20" height="7" fill="#2f5fb3"/>
  <rect x="344" y="128" width="22" height="8" fill="#e7edf3" stroke="#9fb3cf" stroke-width=".7"/>
  <rect x="349" y="121" width="12" height="8" fill="#3b6fc4"/>
  <path d="M348 121Q355 113 362 121Z" fill="#2c58b0"/>
  <path d="M355 113V109" stroke="#2c58b0" stroke-width="1"/>
 </g>
 <!-- publisher logos -->
 <g id="logos" fill="#fff">
  <g stroke="#fff" stroke-width="1.100" fill="none" opacity=".95"><path d="M33.500 515.500H60L58.200 527.500H35.300ZM33.500 515.500L32 513.500M60 515.500L61.500 513.500"/><circle cx="46.700" cy="521.500" r="3.600"/><path d="M43.100 521.500H50.300M46.700 517.900V525.100"/></g>
  <text x="36.500" y="533.500" font-family="'Liberation Serif',serif" font-size="4.400" fill="#fff" opacity=".9">SINCE 1897</text>
  <text x="68" y="526.800" font-family="'Noto Serif CJK SC','Noto Sans CJK SC',serif" font-weight="500" font-size="14" letter-spacing="1.500" fill="#fff">商務印書館</text>
  <text x="69" y="536.300" font-family="'Liberation Serif',serif" font-weight="700" font-size="7.400" fill="#fff">The Commercial Press</text>
  <rect x="162.500" y="514" width="20" height="20.300" fill="#2d8be0"/>
  <g stroke="#cfeaff" stroke-width=".8"><path d="M162.500 517H183M162.500 520H183M162.500 523H183M162.500 526H183M162.500 529H183M162.500 532H183"/></g>
  <circle cx="184.300" cy="524.150" r="10.150" fill="#2d8be0"/><circle cx="181.500" cy="524.150" r="6.800" fill="#e3f3ff"/><circle cx="184.500" cy="524.150" r="5.800" fill="#2d8be0"/>
  <text x="183" y="524.500" font-family="'DejaVu Sans',sans-serif" font-size="7" fill="#e8242c">★</text>
  <text x="199" y="523" font-family="'Noto Sans CJK SC',sans-serif" font-weight="500" font-size="10.600" fill="#fff">星球地图出版社</text>
  <text x="199" y="533.300" font-family="'Liberation Serif',serif" font-size="7.800" fill="#fff" opacity=".92" textLength="74" lengthAdjust="spacingAndGlyphs">STAR MAP PRESS</text>
 </g>
</g>
</g>

<!-- COVER TEXT / BADGE -->
<text x="145" y="56" font-family="'Noto Serif CJK SC','Noto Sans CJK SC',serif" font-weight="400" font-size="14.500" letter-spacing="5.600" fill="#fff">义务教育教科书</text>
<g id="badge" transform="translate(81.5 84.8)">
 <circle r="51" fill="#e9f3e2"/>
 <circle r="49.500" fill="#6ba75a"/>
 <circle r="32" fill="#d3e6c3" stroke="#e6f0dc" stroke-width="1"/>
 <path d="M-26 12L-17 -22Q-8 -27 0 -21Q8 -27 17 -22L26 12Q12 9 0 17Q-12 9 -26 12Z" fill="#7aad66"/>
 <path d="M-22 9L-15 -21Q-7 -25 -0.600 -19.500V12.500Q-10 6 -22 9Z" fill="#eef4e6"/>
 <path d="M22 9L15 -21Q7 -25 0.600 -19.500V12.500Q10 6 22 9Z" fill="#eef4e6"/>
 <path id="arc" d="M-26.840 25.470A37 37 0 1 1 26.840 25.470" fill="none"/>
 <text font-family="'Noto Sans CJK SC',sans-serif" font-weight="700" font-size="10.500" fill="#f4faee" letter-spacing="0.400"><textPath href="#arc" startOffset="0">国家教材委员会专家委员会审核通过</textPath></text>
 <path id="arc2" d="M-18.500 40A44 44 0 0 0 18.500 40" fill="none"/>
 <text font-family="'Liberation Sans',sans-serif" font-weight="700" font-size="10" fill="#111" letter-spacing="3.200"><textPath href="#arc2" startOffset="0">2024</textPath></text>
</g>
<text x="348" y="105" font-family="'Liberation Serif',serif" font-size="22" letter-spacing="24" fill="#111">DILI</text>
<text x="305.500" y="220.500" font-family="'Noto Serif CJK SC','Noto Sans CJK SC',serif" font-weight="900" font-size="98" letter-spacing="24" fill="#000">地理</text>
<path d="M147 176.500H226M147 222.500H226" stroke="#4a4a4a" stroke-width="1.200"/>
<text x="147" y="207" font-family="'Noto Serif CJK SC','Noto Sans CJK SC',serif" font-weight="700" font-size="22" letter-spacing="6" fill="#111">八年级</text>
<path d="M153 246.500H221Q243 246.500 233 264L197 319Q186.500 333 176 319L140 264Q130 246.500 153 246.500Z" fill="#ffee00"/>
<text x="160" y="286" font-family="'Noto Serif CJK SC','Noto Sans CJK SC',serif" font-weight="900" font-size="25" letter-spacing="1" fill="#111">上册</text>
</svg>
</div>
<div class="a" id="page2">
<svg width="621" height="878" viewBox="958 148 621 878" style="left:0;top:0" font-family="'Liberation Sans','Noto Sans CJK SC',sans-serif">
<path d="M1018 361.500H1227.500M1291 361.500H1505" stroke="#8fb6cc" stroke-width="1" stroke-dasharray="1 1.800" fill="none"/>
<text x="1236.500" y="367.500" font-size="16" font-weight="700" fill="#1f6fb5" letter-spacing="15" font-family="'Noto Sans CJK SC',sans-serif">图例</text>
<rect x="1088" y="407" width="347.500" height="367" rx="14" fill="#edf4fc"/>
<text x="1151" y="435.2" font-size="10" font-weight="400" fill="#1e1e1e" letter-spacing="0.05">首都</text>
<text x="1151" y="464.5" font-size="10" font-weight="400" fill="#1e1e1e" letter-spacing="0.05">中国省级行政中心</text>
<text x="1151" y="493.8" font-size="10" font-weight="400" fill="#1e1e1e" letter-spacing="0.05">主要城市</text>
<text x="1151" y="523.1" font-size="10" font-weight="400" fill="#1e1e1e" letter-spacing="0.05">洲界</text>
<text x="1151" y="552.4" font-size="10" font-weight="400" fill="#1e1e1e" letter-spacing="0.05">国界</text>
<text x="1151" y="581.7" font-size="10" font-weight="400" fill="#1e1e1e" letter-spacing="0.05">未定国界</text>
<text x="1151" y="611.0" font-size="10" font-weight="400" fill="#1e1e1e" letter-spacing="0.05">地区界</text>
<text x="1151" y="640.3" font-size="10" font-weight="400" fill="#1e1e1e" letter-spacing="0.05">军事分界线、停火线</text>
<text x="1151" y="669.6" font-size="10" font-weight="400" fill="#1e1e1e" letter-spacing="0.05">中国省级界</text>
<text x="1151" y="698.9" font-size="10" font-weight="400" fill="#1e1e1e" letter-spacing="0.05">中国特别行政区界</text>
<text x="1151" y="728.2" font-size="10" font-weight="400" fill="#1e1e1e" letter-spacing="0.05">高速铁路</text>
<text x="1151" y="757.5" font-size="10" font-weight="400" fill="#1e1e1e" letter-spacing="0.05">铁路</text>
<text x="1351" y="435.2" font-size="10" font-weight="400" fill="#1e1e1e" letter-spacing="0.05">高速公路</text>
<text x="1351" y="464.5" font-size="10" font-weight="400" fill="#1e1e1e" letter-spacing="0.05">主要公路</text>
<text x="1351" y="493.8" font-size="10" font-weight="400" fill="#1e1e1e" letter-spacing="0.05">海岸线</text>
<text x="1351" y="523.1" font-size="10" font-weight="400" fill="#1e1e1e" letter-spacing="0.05">常年河、瀑布</text>
<text x="1351" y="552.4" font-size="10" font-weight="400" fill="#1e1e1e" letter-spacing="0.05">时令河</text>
<text x="1351" y="581.7" font-size="10" font-weight="400" fill="#1e1e1e" letter-spacing="0.05">湖泊</text>
<text x="1351" y="611.0" font-size="10" font-weight="400" fill="#1e1e1e" letter-spacing="0.05">时令湖</text>
<text x="1351" y="640.3" font-size="10" font-weight="400" fill="#1e1e1e" letter-spacing="0.05">运河</text>
<text x="1351" y="669.6" font-size="10" font-weight="400" fill="#1e1e1e" letter-spacing="0.05">沙漠</text>
<text x="1351" y="698.9" font-size="10" font-weight="400" fill="#1e1e1e" letter-spacing="0.05">长城</text>
<text x="1351" y="728.2" font-size="10" font-weight="400" fill="#1e1e1e" letter-spacing="0.05">山峰、海拔／米</text>
<text x="1351" y="757.5" font-size="10" font-weight="400" fill="#1e1e1e" letter-spacing="0.05">珊瑚礁</text>
<circle cx="1110.500" cy="431.8" r="2.500" fill="none" stroke="#222" stroke-width=".8"/><circle cx="1110.500" cy="431.8" r="1.300" fill="#222"/>
<text x="1116" y="435.1" font-size="9" font-weight="700" fill="#222">北京</text>
<circle cx="1110.500" cy="460.8" r="2.200" fill="none" stroke="#444" stroke-width=".7"/><circle cx="1110.500" cy="460.8" r="1" fill="none" stroke="#444" stroke-width=".5"/>
<text x="1116" y="463.8" font-size="8" font-weight="700" fill="#444">合肥</text>
<circle cx="1110.500" cy="490.1" r="1.900" fill="none" stroke="#444" stroke-width=".7"/>
<text x="1116" y="492.9" font-size="7.500" font-weight="400" fill="#555">三亚</text>
<path d="M1106 519.4H1137" stroke="#e5007f" stroke-width="1.300" stroke-dasharray="9 2 1.500 2" fill="none"/><path d="M1106.500 517.4V521.4" stroke="#e5007f" stroke-width="1"/>
<path d="M1106 545.2H1138" stroke="#777" stroke-width=".9" stroke-dasharray="5 1.200 1 1.200" fill="none"/><path d="M1106 546.9000000000001H1138" stroke="#bbb" stroke-width=".7" stroke-dasharray="1 1" fill="none"/>
<text x="1105.500" y="554.2" font-size="6.800" font-weight="700" fill="#444" letter-spacing="0">(世界全图)</text>
<path d="M1106 574.5H1138" stroke="#777" stroke-width=".9" stroke-dasharray="4 2" fill="none"/><path d="M1106 576.2H1138" stroke="#bbb" stroke-width=".7" stroke-dasharray="1 1" fill="none"/>
<text x="1105.500" y="583.5" font-size="6.800" font-weight="700" fill="#444" letter-spacing="0">(世界全图)</text>
<path d="M1106 607.3H1136" stroke="#999" stroke-width="1" stroke-dasharray="8 3" fill="none"/>
<path d="M1107 636.6H1136" stroke="#aaa" stroke-width=".9" stroke-dasharray=".9 2" fill="none"/>
<path d="M1106 665.9H1138" stroke="#999" stroke-width=".8" stroke-dasharray="7 1.500 1 1.500" fill="none"/>
<path d="M1106 695.2H1137" stroke="#a5a5a5" stroke-width="1.100" stroke-dasharray="6 2.500 2 2.500" fill="none"/>
<path d="M1106 724.5H1139" stroke="#f3a6cb" stroke-width="2" fill="none"/><path d="M1106 724.5H1139" stroke="#e5007f" stroke-width="2" stroke-dasharray="8.500 8" fill="none"/>
<path d="M1106 753.8H1139" stroke="#6a6a6a" stroke-width="2" fill="none"/><path d="M1114.500 753.8H1122M1131 753.8H1138.300" stroke="#f2f2f2" stroke-width="1" fill="none"/>
<path d="M1302 431.5H1338.500" stroke="#f39a1e" stroke-width="1.500"/>
<path d="M1302 461.3H1339.500" stroke="#ea4a45" stroke-width="1.100"/>
<path d="M1301.500 488.6q2 -2 4 -1.200q2 1.800 4 0q1.500 -2.500 3 -0.500q1.500 2 3.500 0.500q2 -1.500 4 0q2 1.500 4 0.300q2.500 -1.500 4.500 -0.300q2 1 4 0.200q2.500 -1 5.500 0V495.1H1301.500Z" fill="#cfe6f6"/><path d="M1301.500 488.6q2 -2 4 -1.200q2 1.800 4 0q1.500 -2.500 3 -0.500q1.500 2 3.500 0.500q2 -1.500 4 0q2 1.500 4 0.300q2.500 -1.500 4.500 -0.300q2 1 4 0.200q2.500 -1 5.500 0" fill="none" stroke="#4aa8de" stroke-width=".9"/>
<path d="M1301 522.4q4 -1 7 0t7 -2t6 0t6 1t5 -2t5 1l1 -4M1303 513.4q3 4 7 5t6 1" fill="none" stroke="#3ea6dc" stroke-width=".9"/>
<path d="M1302 551.7q4 -1 7 0t7 -2t6 0t6 1t5 -2t5 1l1 -4M1304 542.7q3 4 7 5t6 1" fill="none" stroke="#3ea6dc" stroke-width=".9" stroke-dasharray="3.500 1.800"/>
<path d="M1318 575.8q2 -1.200 4 0.300t3.500 2.400q-0.500 2.300 -2.800 1.800t-4.200 -2.200q-1.400 -1.400 -0.500 -2.300z" fill="#cfe8f8" stroke="#3ea6dc" stroke-width=".8"/>
<path d="M1318 605.0999999999999q2 -1.200 4 0.300t3.500 2.400q-0.500 2.300 -2.800 1.800t-4.200 -2.200q-1.400 -1.400 -0.500 -2.300z" fill="#e4f2fb" stroke="#3ea6dc" stroke-width=".8" stroke-dasharray="1.600 1"/>
<path d="M1303.500 636.6H1339" stroke="#1ea7e0" stroke-width="1.200"/><path d="M1304 634.8000000000001V636.6M1310 634.8000000000001V636.6M1316 634.8000000000001V636.6M1322 634.8000000000001V636.6M1328 634.8000000000001V636.6M1334 634.8000000000001V636.6M1338.500 634.8000000000001V636.6" stroke="#1ea7e0" stroke-width=".8"/>
<g fill="#d9a58c"><circle cx="1310.50" cy="660.90" r=".55"/><circle cx="1313.05" cy="660.90" r=".55"/><circle cx="1315.60" cy="660.90" r=".55"/><circle cx="1318.15" cy="660.90" r=".55"/><circle cx="1320.70" cy="660.90" r=".55"/><circle cx="1323.25" cy="660.90" r=".55"/><circle cx="1325.80" cy="660.90" r=".55"/><circle cx="1328.35" cy="660.90" r=".55"/><circle cx="1330.90" cy="660.90" r=".55"/><circle cx="1333.45" cy="660.90" r=".55"/><circle cx="1311.77" cy="663.50" r=".55"/><circle cx="1314.32" cy="663.50" r=".55"/><circle cx="1316.87" cy="663.50" r=".55"/><circle cx="1319.42" cy="663.50" r=".55"/><circle cx="1321.97" cy="663.50" r=".55"/><circle cx="1324.52" cy="663.50" r=".55"/><circle cx="1327.07" cy="663.50" r=".55"/><circle cx="1329.62" cy="663.50" r=".55"/><circle cx="1332.17" cy="663.50" r=".55"/><circle cx="1334.72" cy="663.50" r=".55"/><circle cx="1310.50" cy="666.10" r=".55"/><circle cx="1313.05" cy="666.10" r=".55"/><circle cx="1315.60" cy="666.10" r=".55"/><circle cx="1318.15" cy="666.10" r=".55"/><circle cx="1320.70" cy="666.10" r=".55"/><circle cx="1323.25" cy="666.10" r=".55"/><circle cx="1325.80" cy="666.10" r=".55"/><circle cx="1328.35" cy="666.10" r=".55"/><circle cx="1330.90" cy="666.10" r=".55"/><circle cx="1333.45" cy="666.10" r=".55"/><circle cx="1311.77" cy="668.70" r=".55"/><circle cx="1314.32" cy="668.70" r=".55"/><circle cx="1316.87" cy="668.70" r=".55"/><circle cx="1319.42" cy="668.70" r=".55"/><circle cx="1321.97" cy="668.70" r=".55"/><circle cx="1324.52" cy="668.70" r=".55"/><circle cx="1327.07" cy="668.70" r=".55"/><circle cx="1329.62" cy="668.70" r=".55"/><circle cx="1332.17" cy="668.70" r=".55"/><circle cx="1334.72" cy="668.70" r=".55"/><circle cx="1310.50" cy="671.30" r=".55"/><circle cx="1313.05" cy="671.30" r=".55"/><circle cx="1315.60" cy="671.30" r=".55"/><circle cx="1318.15" cy="671.30" r=".55"/><circle cx="1320.70" cy="671.30" r=".55"/><circle cx="1323.25" cy="671.30" r=".55"/><circle cx="1325.80" cy="671.30" r=".55"/><circle cx="1328.35" cy="671.30" r=".55"/><circle cx="1330.90" cy="671.30" r=".55"/><circle cx="1333.45" cy="671.30" r=".55"/></g>
<path d="M1306.500 696.5v-2.600h2v2.600h2v-2.600h2v2.600h2v-2.600h2v2.600h2v-2.600h2v2.600h2v-2.600h2v2.600h2v-2.600h2v2.600h2v-2.600h2v2.600h2v-2.600h2v2.600h2" fill="none" stroke="#a8a8a8" stroke-width=".8"/>
<path d="M1312.500 727.5l2 -6.500l2 6.500z" fill="#7a3b1e"/><text x="1318" y="727.3" font-size="6.800" fill="#333" textLength="13" lengthAdjust="spacingAndGlyphs">3952</text>
<path d="M1319.300 753.8q0.500 -2.400 2.800 -2.300t2 2.200q-0.300 2.300 -2.600 2.300t-2.200 -2.200zM1320 755.3l3.800 -3" fill="none" stroke="#ee86b4" stroke-width=".8"/>
</svg></div>
<!-- SCROLLBAR etc -->
<div class="a" id="sbtrack"></div>
<svg width="20" height="895" viewBox="1900 145 20 895" style="left:1900px;top:145px">
<path d="M1904 159.700L1908.500 155L1913 159.700Z" fill="#8a8a8a"/>
<rect x="1904.200" y="168" width="8.600" height="16.800" rx="4.300" fill="#8b8b8b"/>
<path d="M1904 1021H1913L1908.500 1026Z" fill="#8a8a8a"/>
<defs><pattern id="gstripe" width="8" height="2" patternUnits="userSpaceOnUse"><rect width="8" height="2" fill="#2aa24c"/><rect y="1.200" width="8" height=".8" fill="#7fd096"/></pattern>
<clipPath id="pillclip"><rect x="1910" y="480" width="8" height="57" rx="4"/></clipPath>
<filter id="pillsh" x="-100%" y="-20%" width="300%" height="140%"><feGaussianBlur stdDeviation="1.5"/></filter></defs>
<rect x="1909.500" y="481" width="9" height="58" rx="4.500" fill="#000" opacity=".18" filter="url(#pillsh)"/>
<g clip-path="url(#pillclip)"><rect x="1910" y="480" width="8" height="24" fill="#616161"/><rect x="1910" y="504" width="8" height="33" fill="url(#gstripe)"/></g>
<rect x="1910.300" y="480.300" width="7.400" height="56.400" rx="3.700" fill="none" stroke="#4f5a52" stroke-width=".6" opacity=".6"/>
</svg>
<svg width="26" height="26" viewBox="1863 979 26 26" style="left:1863px;top:979px">
<rect x="1864" y="980" width="24" height="24" rx="3" fill="#dfa1a1" stroke="#ecc4c2" stroke-width=".8"/>
<path d="M1875.500 984.500Q1876.600 984.500 1876.300 987Q1875.800 990 1874.800 993Q1873.500 996.500 1870.800 998.800Q1868.500 1000 1868.300 998.700Q1868.300 997.300 1871.500 995.800Q1875.300 994.200 1880.500 994Q1883.800 994.300 1883.300 995.500Q1882.500 996.300 1880 995.500Q1877.300 994 1875.800 991Q1874.500 988 1874.700 986Q1874.800 984.500 1875.500 984.500Z" fill="none" stroke="#fff" stroke-width="1.100" stroke-linejoin="round"/>
</svg>
<!-- TASKBAR -->
<div class="a" id="task"></div>
<div class="a" id="tsearch"></div>
<div class="a" id="edgebg"></div>
<div class="a tl" style="left:374px;width:31px"></div><div class="a tl" style="left:406px;width:8px;opacity:.55"></div><div class="a tl" style="left:423px;width:31px"></div><div class="a tl" style="left:455px;width:8px;opacity:.55"></div><div class="a tl" style="left:468px;width:48px"></div>
<div class="a tt" style="left:135px;top:1050px;font-size:12px">杨振宁院士逝世</div>
<div class="a tt" style="left:1452px;top:1050px;font-size:12px">星期日</div>
<div class="a tt" style="left:1579px;top:1049px;font-size:15.500px;letter-spacing:-.3px">19°C</div>
<div class="a tt" style="left:1619px;top:1049.500px;font-size:13.500px">阴</div>
<div class="a tt" style="left:1774.500px;top:1049px;font-size:15px;font-weight:500">中</div>
<div class="a tt" style="left:1815.500px;top:1041.500px;font-size:12px">14:02</div>
<div class="a tt" style="left:1797.500px;top:1061px;font-size:12px;letter-spacing:.45px">2025/10/19</div>
<svg id="taskicons" width="1920" height="40" viewBox="0 1040 1920 40" style="left:0;top:1040px">
<g fill="#fff"><path d="M15.500 1054.800L22.300 1053.800V1059.800H15.500ZM23.200 1053.700L32.300 1052.400V1059.800H23.200ZM15.500 1060.700H22.300V1066.700L15.500 1065.700ZM23.200 1060.700H32.300V1068.100L23.200 1066.800Z"/></g>
<g fill="none" stroke="#fff" stroke-width="2.400" stroke-linecap="round"><circle cx="74.500" cy="1057.500" r="7.800"/><path d="M69.200 1063.500L62.500 1070.500"/></g>
<g><text x="103.300" y="1068.500" font-family="'Liberation Sans',sans-serif" font-weight="700" font-size="24.500" fill="#2a8df0">e</text><path d="M103 1067.500Q99.500 1065.500 104.500 1058Q111 1050 117.500 1050.500Q120.500 1051.500 118.300 1055.500" fill="none" stroke="#4aa6f7" stroke-width="1.700"/></g>
<path d="M123 1061L126 1057L129 1061Z" fill="#aaa"/>
<g fill="none" stroke="#8a8a8a" stroke-width="1.400" stroke-linecap="round"><circle cx="298.500" cy="1058.500" r="6.500"/><path d="M303.200 1063.200L307 1067"/></g>
<g><circle cx="344.5" cy="1059.5" r="12" fill="#f59a23"/><path d="M344.5 1059.5L334.11 1053.50A12 12 0 0 1 352.21 1050.31Z" fill="#f0392b"/><path d="M344.5 1059.5L352.21 1050.31A12 12 0 0 1 355.38 1064.57Z" fill="#a23bd6"/><path d="M344.5 1059.5L355.38 1064.57A12 12 0 0 1 343.45 1071.45Z" fill="#2f8fe8"/><path d="M344.5 1059.5L343.45 1071.45A12 12 0 0 1 332.91 1062.61Z" fill="#35c46a"/><path d="M344.5 1059.5L332.91 1062.61A12 12 0 0 1 334.11 1053.50Z" fill="#f7c52d"/><circle cx="344.5" cy="1059.5" r="8.40" fill="#fff"/><circle cx="344.5" cy="1059.5" r="6.96" fill="#2bb6ea"/><text x="340.18" y="1063.82" font-family="'Liberation Sans',sans-serif" font-weight="700" font-size="13.8" fill="#fff">e</text></g>
<g><path d="M383.400 1050.500H391.500L393.300 1052.800H404.800V1068.800H383.400Z" fill="#e9a825"/><path d="M383.400 1054.300H404.800V1068.800H383.400Z" fill="#ffd466"/><path d="M388 1061.300H400.300V1068.800H388Z" fill="#4a9be0"/><path d="M391.300 1064.800H397V1068.800H391.300Z" fill="#ffd466"/></g>
<g><rect x="438" y="1048.500" width="16.500" height="21" rx="1.500" fill="#2b7cd3"/><rect x="438" y="1048.500" width="16.500" height="5.300" fill="#41a5ee"/><rect x="438" y="1059" width="16.500" height="5.300" fill="#185abd"/><rect x="438" y="1064.300" width="16.500" height="5.200" fill="#103f91"/><rect x="432" y="1052.500" width="13" height="13" rx="1.300" fill="#185abd"/><text x="433.300" y="1063.300" font-family="'Liberation Sans',sans-serif" font-weight="700" font-size="10.500" fill="#fff">W</text></g>
<g><defs><linearGradient id="edg1" x1="0" y1="0" x2="1" y2="1"><stop offset="0" stop-color="#35c1f1"/><stop offset="1" stop-color="#0c59a4"/></linearGradient><linearGradient id="edg2" x1="0" y1="0" x2="1" y2="0"><stop offset="0" stop-color="#2fbdd8"/><stop offset="1" stop-color="#6fdc5a"/></linearGradient></defs>
<circle cx="491.500" cy="1059.500" r="11.500" fill="url(#edg1)"/>
<path d="M480.300 1057Q481.500 1048 491.500 1048Q501 1048 503 1057Q503.500 1062 498 1062.500H492Q493.500 1060 492.800 1058Q491 1054.500 487 1055Q482.500 1055.500 480.300 1060Z" fill="url(#edg2)"/>
<path d="M487 1055Q483 1060 485.500 1065Q488 1070 494 1070.800Q486 1071.500 482 1066Q479 1061 480.300 1057Q483 1054.500 487 1055Z" fill="#1b4f9c" opacity=".85"/>
<path d="M492 1062.500Q490 1066 494 1068Q498.500 1069.500 502 1065Q500 1068 495 1070.800Q488.500 1070 486.500 1064.500Q486 1060 489.500 1058.500Q493 1058.500 492 1062.500Z" fill="#0f4a94"/></g>
<g><defs><linearGradient id="calg" x1="0" y1="0" x2="0" y2="1"><stop offset="0" stop-color="#d48bf0"/><stop offset="1" stop-color="#a55ee3"/></linearGradient></defs>
<rect x="1420.500" y="1050" width="23.500" height="21" rx="3.500" fill="url(#calg)"/><rect x="1420.500" y="1050" width="23.500" height="5.500" rx="2.500" fill="#b56ae6"/>
<rect x="1425" y="1047.800" width="2.600" height="5.500" rx="1.300" fill="#c98af0"/><rect x="1436.800" y="1047.800" width="2.600" height="5.500" rx="1.300" fill="#c98af0"/>
<g fill="#e9c9fb"><rect x="1426" y="1058.500" width="4.300" height="3.800" rx="1"/><rect x="1434" y="1058.500" width="4.300" height="3.800" rx="1"/><rect x="1426" y="1064.500" width="4.300" height="3.800" rx="1"/><rect x="1434" y="1064.500" width="4.300" height="3.800" rx="1"/></g></g>
<g><rect x="1512.800" y="1052.500" width="6" height="4" fill="#d9d9d9"/><rect x="1511.300" y="1055.500" width="9" height="13" rx="1.500" fill="#57b947"/><path d="M1515.800 1058V1066M1513.800 1061.500Q1513.800 1063.500 1515.800 1064M1517.800 1060.500Q1517.800 1062.500 1515.800 1063" stroke="#fff" stroke-width=".9" fill="none"/></g>
<g><path d="M1551.500 1066.800Q1546.300 1066.800 1546.300 1062.300Q1546.300 1058.300 1550.800 1058Q1552.500 1052.800 1558.500 1052.800Q1564.500 1052.800 1565.800 1058.300Q1571.300 1058.300 1571.300 1062.600Q1571.300 1066.800 1566.800 1066.800Z" fill="#b9cdf4"/><path d="M1551.500 1066.800Q1546.300 1066.800 1546.300 1062.300Q1550 1065 1558 1063.500Q1566 1062 1571.300 1062.600Q1571.300 1066.800 1566.800 1066.800Z" fill="#9fb8ea"/><circle cx="1564.700" cy="1053" r="5.600" fill="#e8382f"/><text x="1562.200" y="1056.300" font-family="'Liberation Sans',sans-serif" font-weight="700" font-size="8.500" fill="#fff">2</text></g>
<path d="M1658.500 1062.500L1664 1056.500L1669.500 1062.500" fill="none" stroke="#fff" stroke-width="1.400"/>
<g><path d="M1680 1053H1687L1688.500 1056L1690 1053H1695.500V1056H1692.500L1688.500 1065L1684 1056H1680Z" fill="#e5341f"/><path d="M1690.500 1053H1695.500V1060H1693V1056H1690.500Z" fill="#e5341f"/><path d="M1689 1066.500Q1687 1066.500 1687 1064.500Q1687 1062.800 1689 1062.600Q1689.800 1060.300 1692.300 1060.300Q1694.800 1060.300 1695.500 1062.700Q1697.500 1063 1697.500 1064.700Q1697.500 1066.500 1695.500 1066.500Z" fill="#2aa0f0"/></g>
<g><circle cx="1711.5" cy="1059.5" r="8" fill="#f59a23"/><path d="M1711.5 1059.5L1704.57 1055.50A8 8 0 0 1 1716.64 1053.37Z" fill="#f0392b"/><path d="M1711.5 1059.5L1716.64 1053.37A8 8 0 0 1 1718.75 1062.88Z" fill="#a23bd6"/><path d="M1711.5 1059.5L1718.75 1062.88A8 8 0 0 1 1710.80 1067.47Z" fill="#2f8fe8"/><path d="M1711.5 1059.5L1710.80 1067.47A8 8 0 0 1 1703.77 1061.57Z" fill="#35c46a"/><path d="M1711.5 1059.5L1703.77 1061.57A8 8 0 0 1 1704.57 1055.50Z" fill="#f7c52d"/><circle cx="1711.5" cy="1059.5" r="5.60" fill="#fff"/><circle cx="1711.5" cy="1059.5" r="4.64" fill="#2bb6ea"/><text x="1708.62" y="1062.38" font-family="'Liberation Sans',sans-serif" font-weight="700" font-size="9.2" fill="#fff">e</text></g>
<g fill="none" stroke="#fff" stroke-width="1.200"><rect x="1732.500" y="1054" width="11.500" height="8.500"/><path d="M1738.200 1062.500V1066.500M1734.500 1066.500H1742"/><rect x="1728.500" y="1053" width="4.500" height="5" fill="#1c2b38"/><path d="M1730.700 1058V1061"/></g>
<g fill="none" stroke="#fff" stroke-width="1.200" stroke-linejoin="round"><path d="M1752 1057H1754.500L1758 1053.500V1065.500L1754.500 1062H1752Z"/><path d="M1760.300 1057Q1761.500 1059.500 1760.300 1062M1762.500 1055Q1764.800 1059.500 1762.500 1064M1764.800 1053Q1768 1059.500 1764.800 1066" stroke-linecap="round" stroke-width="1"/></g>
<path d="M1879 1052.500H1894.500V1064.500H1889.500L1886.700 1067.500L1884 1064.500H1879Z" fill="none" stroke="#fff" stroke-width="1.300" stroke-linejoin="round"/>
<path d="M1915.500 1040V1080" stroke="#5a6670" stroke-width="1"/>
</svg>
</body>
</html>
